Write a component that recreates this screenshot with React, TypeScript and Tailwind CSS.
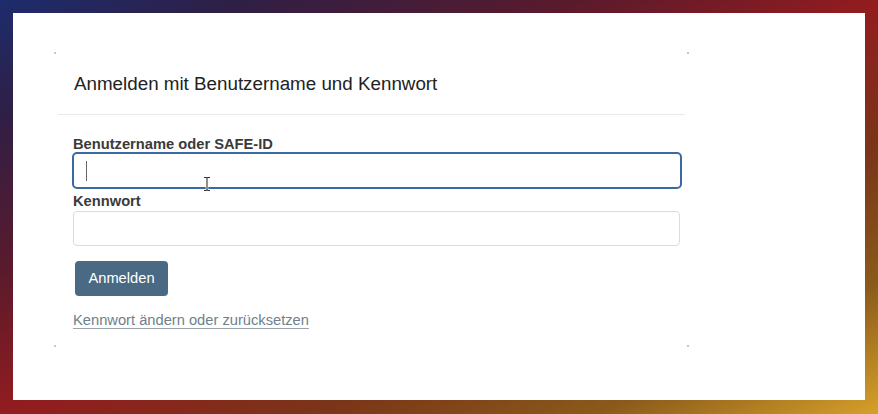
import React from "react";

function Dot({ className }: { className: string }) {
  return <div className={`absolute h-[2px] w-[2px] bg-[#c8c8c8] ${className}`} />;
}

export default function App() {
  return (
    <div className="flex h-[414px] w-[878px] bg-[linear-gradient(to_bottom_right,#1d2c6e_0%,#2f1f45_14%,#5a1a2c_33%,#921c1f_50%,#7a3518_68%,#8a5a1a_84%,#d6a02a_100%)] p-[13px] pb-[14px] font-['Liberation_Sans',Arial,sans-serif]">
      <div className="flex-1 bg-white pl-[41px] pt-[39px]">
        <div className="relative h-[295px] w-[635px]">
          <Dot className="left-0 top-0" />
          <Dot className="right-0 top-0" />
          <Dot className="bottom-0 left-0" />
          <Dot className="bottom-0 right-0" />
          <div className="px-[20px] pt-[21px] pb-[19px] text-[18.8px] leading-[22px] text-[#222]">
            Anmelden mit Benutzername und Kennwort
          </div>
          <div className="mx-[4px] h-[1px] bg-[#eaeaea]" />
          <div className="flex flex-col px-[19px] pt-[21px]">
            <label className="text-[14.7px] leading-[16px] font-bold text-[#3a3a3a]">
              Benutzername oder SAFE-ID
            </label>
            <div className="relative -ml-[1px] h-[37px] w-[610px] rounded-[5px] border-2 border-[#3b69a6]">
              <div className="absolute left-[12px] top-[7px] h-[20px] w-[1px] bg-[#666]" />
              <svg
                className="absolute left-[128px] top-[22px]"
                width="10"
                height="16"
                viewBox="0 0 10 16"
              >
                <path
                  d="M2 1.5h2.2L5 2.3l0.8-0.8H8M5 2.3v11.4M2 14.5h2.2l0.8-0.8 0.8 0.8H8"
                  stroke="#fff"
                  strokeWidth="2.6"
                  fill="none"
                />
                <path
                  d="M2 1.5h2.2L5 2.3l0.8-0.8H8M5 2.3v11.4M2 14.5h2.2l0.8-0.8 0.8 0.8H8"
                  stroke="#333"
                  strokeWidth="1.1"
                  fill="none"
                />
              </svg>
            </div>
            <label className="mt-[4px] text-[14.7px] leading-[16px] font-bold text-[#3a3a3a]">
              Kennwort
            </label>
            <div className="mt-[2px] h-[35px] w-[607px] rounded-[4px] border border-[#dcdcdc]" />
            <div className="mt-[15px] ml-[2px] flex h-[35px] w-[93px] items-center justify-center rounded-[4px] bg-[#4a6a83] text-[14.7px] text-white">
              Anmelden
            </div>
            <a className="mt-[16px] w-fit text-[14.7px] leading-[16px] text-[#6f7f8c] underline decoration-[#9aa4ad] underline-offset-[3px]">
              Kennwort ändern oder zurücksetzen
            </a>
          </div>
        </div>
      </div>
    </div>
  );
}
